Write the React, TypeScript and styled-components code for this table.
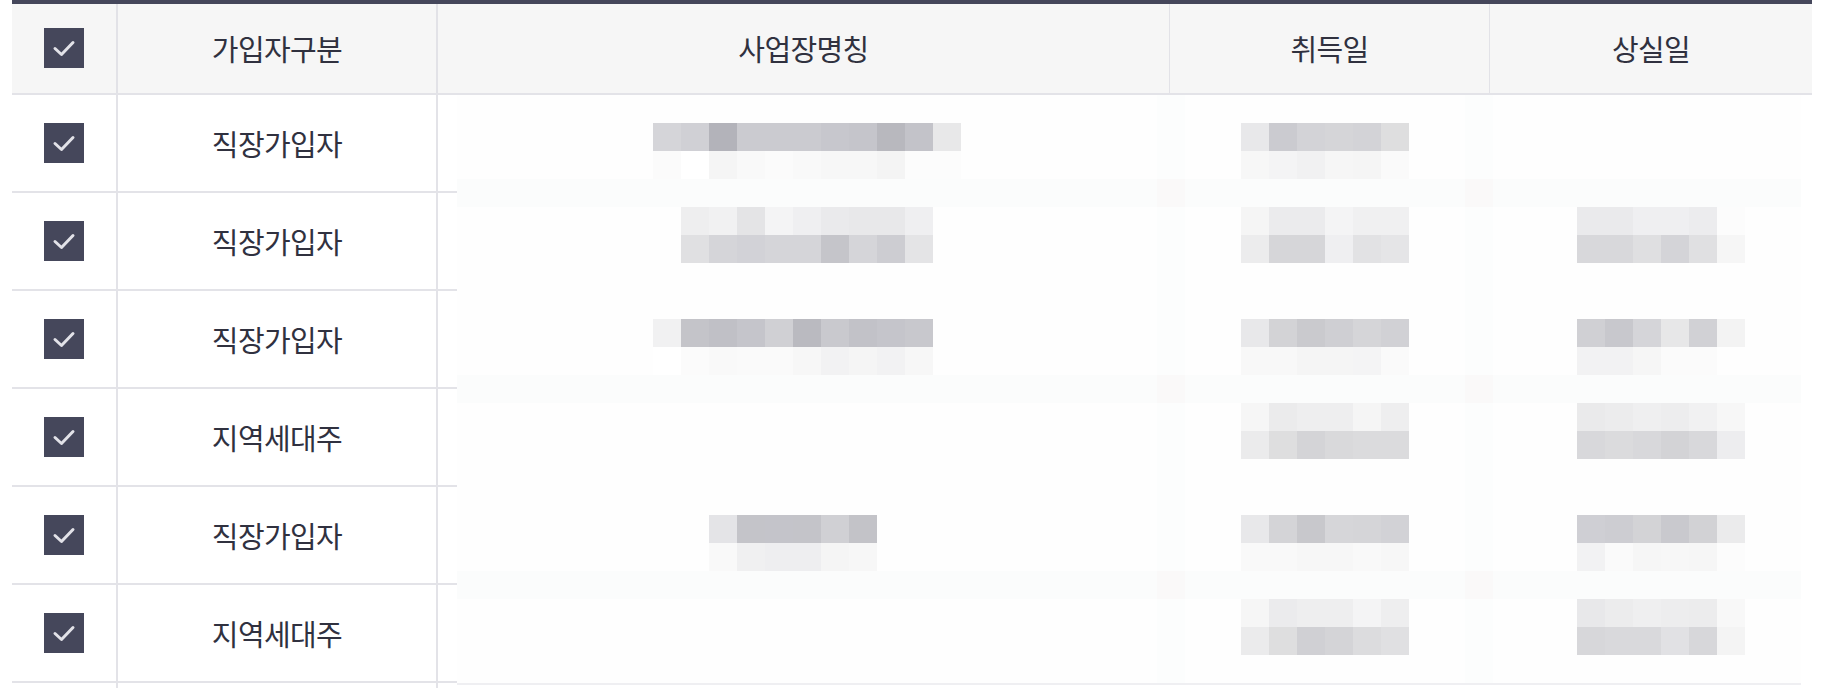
import React from "react";
import styled, { createGlobalStyle } from "styled-components";

const GlobalStyle = createGlobalStyle`
  html, body { margin: 0; padding: 0; background: #ffffff; }
  * { box-sizing: border-box; }
`;

const LINE = "#e3e3e8";
const DARK = "#45475b";

const Page = styled.div`
  padding-left: 12px;
  height: 688px;
  overflow: hidden;
`;

const Table = styled.div`
  width: 1800px;
  border-top: 4px solid ${DARK};
  font-family: "Noto Sans CJK KR", "Noto Sans", sans-serif;
  color: #30313f;
`;

const HeaderRow = styled.div`
  display: grid;
  grid-template-columns: 106px 320px 732px 320px 322px;
  height: 91px;
  background: #f6f6f6;
  border-bottom: 2px solid ${LINE};
`;

const HeaderCell = styled.div<{ $line: number }>`
  display: flex;
  align-items: center;
  justify-content: center;
  padding-bottom: 2px;
  font-size: 29px;
  letter-spacing: -0.6px;
  border-right: ${(p) => (p.$line ? `${p.$line}px solid #e2e2e7` : "none")};
`;

const Body = styled.div`
  display: flex;
  align-items: flex-start;
`;

const LeftRows = styled.div`
  width: 445px;
  flex: none;
`;

const BodyRow = styled.div`
  display: grid;
  grid-template-columns: 106px 320px 19px;
  height: 98px;
  border-bottom: 2px solid ${LINE};
`;

const BodyCell = styled.div<{ $line?: boolean }>`
  display: flex;
  align-items: center;
  justify-content: center;
  font-size: 29px;
  letter-spacing: -0.6px;
  border-right: ${(p) => (p.$line ? `2px solid ${LINE}` : "none")};
`;

const RightPart = styled.div`
  display: flex;
  flex-direction: column;
  flex: none;
`;

const MosaicSvg = styled.svg`
  display: block;
  shape-rendering: crispEdges;
`;

const TailStrip = styled.div`
  width: 1344px;
  height: 12px;
  border-top: 2px solid #efeff2;
`;

const Box = styled.span`
  display: inline-flex;
  align-items: center;
  justify-content: center;
  width: 40px;
  height: 40px;
  background: ${DARK};
`;

const Check = () => (
  <Box>
    <svg width="40" height="40" viewBox="0 0 40 40">
      <polyline
        points="11,20.5 17.5,26.5 29,14.5"
        fill="none"
        stroke="#e2e2e8"
        strokeWidth="3"
        strokeLinecap="round"
        strokeLinejoin="round"
      />
    </svg>
  </Box>
);

type Run = { r: number; c: number; colors: string[] };

const runs: Run[] = [
  // 사업장명칭
  { r: 1, c: 7, colors: ["d5d5d9", "d0d0d5", "b3b3ba", "cbcbd0", "cbcbd0", "cbcbd0", "c7c7cd", "c5c5cb", "b8b8be", "c3c3c9", "e8e8e9"] },
  { r: 2, c: 7, colors: ["fbfbfb", "ffffff", "f5f5f5", "f9f9f9", "fbfbfb", "f9f9f9", "f7f7f7", "f7f7f7", "f4f4f4", "fcfcfc", "fcfcfc"] },
  { r: 4, c: 8, colors: ["eeeeef", "f1f1f2", "e4e4e6", "f4f4f5", "efeff1", "eaeaec", "e8e8ea", "e8e8ea", "efeff1"] },
  { r: 5, c: 8, colors: ["e0e0e2", "d5d5d9", "d2d2d7", "d5d5d9", "d5d5d9", "c5c5ca", "d5d5d9", "cdcdd2", "e4e4e6"] },
  { r: 8, c: 7, colors: ["f1f1f2", "c4c4c9", "c0c0c6", "c5c5cb", "d0d0d4", "babac0", "c9c9ce", "c2c2c8", "c5c5cb", "c8c8cd"] },
  { r: 9, c: 7, colors: ["ffffff", "fbfbfb", "f9f9f9", "fafafa", "fafafa", "f7f7f7", "f2f2f3", "f5f5f5", "f2f2f3", "f7f7f7"] },
  { r: 15, c: 9, colors: ["e4e4e7", "c4c4c9", "c4c4ca", "c4c4c9", "d0d0d4", "c3c3c8"] },
  { r: 16, c: 9, colors: ["f9f9f9", "f0f0f1", "eeeef0", "eeeef0", "f5f5f5", "f7f7f7"] },
  // 취득일
  { r: 1, c: 28, colors: ["e8e8ea", "cbcbd0", "d3d3d7", "d5d5d8", "d3d3d7", "dededf"] },
  { r: 2, c: 28, colors: ["f7f7f7", "f4f4f5", "f1f1f2", "f6f6f6", "f5f5f5", "fafafa"] },
  { r: 4, c: 28, colors: ["f5f5f5", "ebebed", "ebebed", "f4f4f5", "f0f0f1", "f0f0f1"] },
  { r: 5, c: 28, colors: ["ececed", "d6d6d9", "d6d6d9", "efeff1", "e2e2e4", "e5e5e7"] },
  { r: 8, c: 28, colors: ["e8e8ea", "d3d3d6", "cacace", "cfcfd3", "d5d5d8", "d1d1d5"] },
  { r: 9, c: 28, colors: ["f8f8f8", "f8f8f8", "f5f5f5", "f5f5f5", "f4f4f5", "fafafa"] },
  { r: 11, c: 28, colors: ["f6f6f6", "ebebec", "eeeeef", "eeeeef", "f5f5f5", "eeeeef"] },
  { r: 12, c: 28, colors: ["ebebec", "dededf", "d4d4d7", "d9d9db", "dbdbdd", "dbdbdd"] },
  { r: 15, c: 28, colors: ["e8e8ea", "d4d4d7", "c8c8cc", "d6d6d9", "d5d5d8", "d2d2d6"] },
  { r: 16, c: 28, colors: ["f9f9f9", "f9f9f9", "f7f7f7", "f7f7f7", "f9f9f9", "f7f7f7"] },
  { r: 18, c: 28, colors: ["f6f6f6", "ebebed", "eeeeef", "eeeeef", "f4f4f5", "eeeeef"] },
  { r: 19, c: 28, colors: ["ebebec", "dededf", "d0d0d4", "d4d4d7", "dcdcde", "e0e0e2"] },
  // 상실일
  { r: 4, c: 40, colors: ["eaeaec", "eaeaec", "efeff1", "efeff1", "ececee", "fcfcfc"] },
  { r: 5, c: 40, colors: ["d8d8db", "d8d8db", "dfdfe1", "d4d4d8", "e0e0e2", "f6f6f6"] },
  { r: 8, c: 40, colors: ["d0d0d4", "c8c8cd", "d5d5d9", "e7e7e8", "d1d1d5", "f3f3f3"] },
  { r: 9, c: 40, colors: ["f2f2f3", "f2f2f3", "f6f6f6", "fbfbfb", "fbfbfb", "fefefe"] },
  { r: 11, c: 40, colors: ["eaeaeb", "ececed", "efeff0", "ededee", "f1f1f2", "f7f7f7"] },
  { r: 12, c: 40, colors: ["d8d8db", "dbdbdd", "d8d8db", "d3d3d6", "d8d8db", "ededef"] },
  { r: 15, c: 40, colors: ["cfcfd4", "cdcdd2", "d3d3d6", "c9c9ce", "d2d2d5", "ebebec"] },
  { r: 16, c: 40, colors: ["f2f2f3", "fafafa", "f6f6f6", "f7f7f7", "f6f6f6", "fcfcfc"] },
  { r: 18, c: 40, colors: ["e8e8ea", "ececed", "efeff0", "ededee", "ececed", "f8f8f8"] },
  { r: 19, c: 40, colors: ["d7d7da", "d9d9dc", "d9d9dc", "e1e1e4", "d7d7da", "f4f4f4"] },
];

const B = 28;
const COLS = 48;
const ROWS = 21;
const bandRows = [3, 10, 17];
const bandCols = [25, 36];

const Mosaic = () => (
  <MosaicSvg width={COLS * B} height={ROWS * B} viewBox={`0 0 ${COLS * B} ${ROWS * B}`}>
    <rect x="0" y="0" width={COLS * B} height={ROWS * B} fill="#fefefe" />
    {bandCols.map((c) => (
      <rect key={`bc${c}`} x={c * B} y="0" width={B} height={ROWS * B} fill="#fcfdfd" />
    ))}
    {bandRows.map((r) => (
      <rect key={`br${r}`} x="0" y={r * B} width={COLS * B} height={B} fill="#fbfcfc" />
    ))}
    {bandRows.flatMap((r) =>
      bandCols.map((c) => <rect key={`x${r}-${c}`} x={c * B} y={r * B} width={B} height={B} fill="#faf9f9" />)
    )}
    {runs.flatMap((run) =>
      run.colors.map((col, i) => (
        <rect key={`${run.r}-${run.c + i}`} x={(run.c + i) * B} y={run.r * B} width={B} height={B} fill={`#${col}`} />
      ))
    )}
  </MosaicSvg>
);

const headers = [
  { label: "", line: 2, check: true },
  { label: "가입자구분", line: 2 },
  { label: "사업장명칭", line: 1 },
  { label: "취득일", line: 1 },
  { label: "상실일", line: 0 },
];

const rows = ["직장가입자", "직장가입자", "직장가입자", "지역세대주", "직장가입자", "지역세대주"];

export default function App() {
  return (
    <>
      <GlobalStyle />
      <Page>
        <Table>
          <HeaderRow>
            {headers.map((h, i) => (
              <HeaderCell key={i} $line={h.line}>
                {h.check ? <Check /> : h.label}
              </HeaderCell>
            ))}
          </HeaderRow>
          <Body>
            <LeftRows>
              {rows.map((t, i) => (
                <BodyRow key={i}>
                  <BodyCell $line>
                    <Check />
                  </BodyCell>
                  <BodyCell $line>{t}</BodyCell>
                  <BodyCell />
                </BodyRow>
              ))}
              <BodyRow>
                <BodyCell $line />
                <BodyCell $line />
                <BodyCell />
              </BodyRow>
            </LeftRows>
            <RightPart>
              <Mosaic />
              <TailStrip />
            </RightPart>
          </Body>
        </Table>
      </Page>
    </>
  );
}
